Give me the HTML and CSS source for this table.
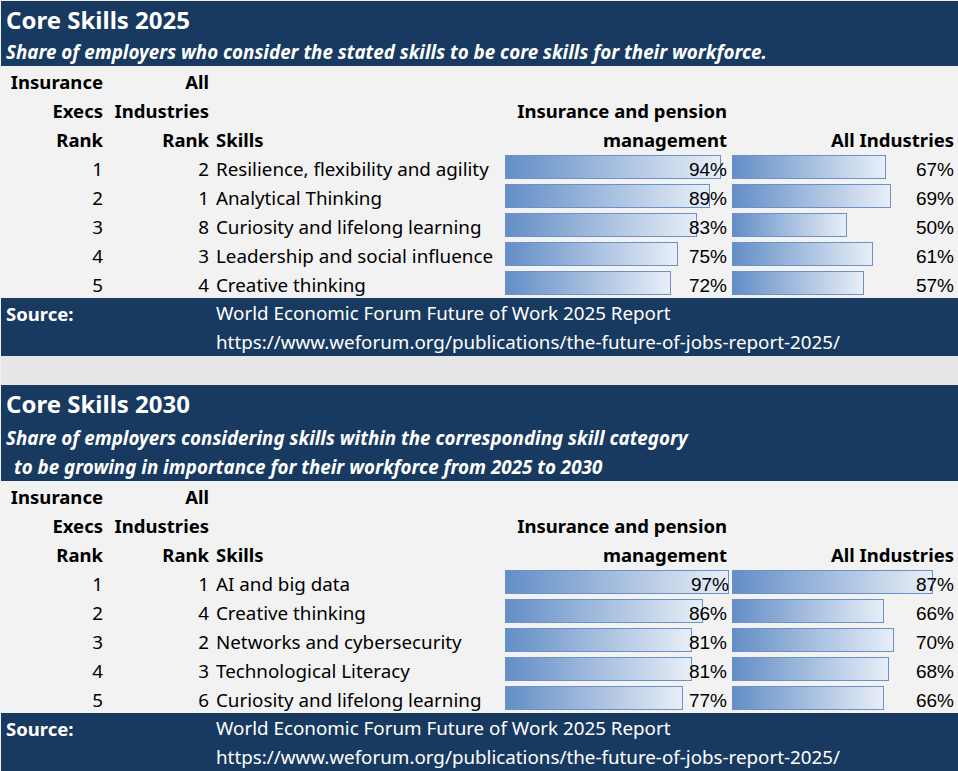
FILE: index.html
```html
<!DOCTYPE html>
<html lang="en">
<head>
<meta charset="utf-8">
<title>Core Skills</title>
<link rel="stylesheet" href="styles.css">
</head>
<body>
<div class="sheet">
  <section class="block">
    <div class="title">Core Skills 2025</div>
    <div class="subtitle">Share of employers who consider the stated skills to be core skills for their workforce.</div>
    <div class="row head"><div class="c a">Insurance</div><div class="c b">All</div><div class="c s"></div><div class="c d"></div><div class="c e"></div></div>
    <div class="row head"><div class="c a">Execs</div><div class="c b">Industries</div><div class="c s"></div><div class="c d">Insurance and pension</div><div class="c e"></div></div>
    <div class="row head"><div class="c a">Rank</div><div class="c b">Rank</div><div class="c s">Skills</div><div class="c d">management</div><div class="c e">All Industries</div></div>

    <div class="row data"><div class="c a">1</div><div class="c b">2</div><div class="c s">Resilience, flexibility and agility</div>
      <div class="c d bar-cell"><span class="bar" style="width:216px"></span><span class="pct">94%</span></div>
      <div class="c e bar-cell"><span class="bar" style="width:154px"></span><span class="pct">67%</span></div></div>
    <div class="row data"><div class="c a">2</div><div class="c b">1</div><div class="c s">Analytical Thinking</div>
      <div class="c d bar-cell"><span class="bar" style="width:205px"></span><span class="pct">89%</span></div>
      <div class="c e bar-cell"><span class="bar" style="width:159px"></span><span class="pct">69%</span></div></div>
    <div class="row data"><div class="c a">3</div><div class="c b">8</div><div class="c s">Curiosity and lifelong learning</div>
      <div class="c d bar-cell"><span class="bar" style="width:192px"></span><span class="pct">83%</span></div>
      <div class="c e bar-cell"><span class="bar" style="width:115px"></span><span class="pct">50%</span></div></div>
    <div class="row data"><div class="c a">4</div><div class="c b">3</div><div class="c s">Leadership and social influence</div>
      <div class="c d bar-cell"><span class="bar" style="width:173px"></span><span class="pct">75%</span></div>
      <div class="c e bar-cell"><span class="bar" style="width:141px"></span><span class="pct">61%</span></div></div>
    <div class="row data"><div class="c a">5</div><div class="c b">4</div><div class="c s">Creative thinking</div>
      <div class="c d bar-cell"><span class="bar" style="width:166px"></span><span class="pct">72%</span></div>
      <div class="c e bar-cell"><span class="bar" style="width:132px"></span><span class="pct">57%</span></div></div>

    <div class="source">
      <div class="src-row"><div class="src-label">Source:</div><div class="src-text">World Economic Forum Future of Work 2025 Report</div></div>
      <div class="src-row"><div class="src-label"></div><div class="src-text">https://www.weforum.org/publications/the-future-of-jobs-report-2025/</div></div>
    </div>
  </section>

  <div class="spacer"></div>

  <section class="block">
    <div class="title title-tall">Core Skills 2030</div>
    <div class="subtitle">Share of employers considering skills within the corresponding skill category</div>
    <div class="subtitle sub-indent">to be growing in importance for their workforce from 2025 to 2030</div>
    <div class="row head"><div class="c a">Insurance</div><div class="c b">All</div><div class="c s"></div><div class="c d"></div><div class="c e"></div></div>
    <div class="row head"><div class="c a">Execs</div><div class="c b">Industries</div><div class="c s"></div><div class="c d">Insurance and pension</div><div class="c e"></div></div>
    <div class="row head"><div class="c a">Rank</div><div class="c b">Rank</div><div class="c s">Skills</div><div class="c d">management</div><div class="c e">All Industries</div></div>

    <div class="row data"><div class="c a">1</div><div class="c b">1</div><div class="c s">AI and big data</div>
      <div class="c d bar-cell"><span class="bar" style="width:224px"></span><span class="pct">97%</span></div>
      <div class="c e bar-cell"><span class="bar" style="width:201px"></span><span class="pct">87%</span></div></div>
    <div class="row data"><div class="c a">2</div><div class="c b">4</div><div class="c s">Creative thinking</div>
      <div class="c d bar-cell"><span class="bar" style="width:198px"></span><span class="pct">86%</span></div>
      <div class="c e bar-cell"><span class="bar" style="width:152px"></span><span class="pct">66%</span></div></div>
    <div class="row data"><div class="c a">3</div><div class="c b">2</div><div class="c s">Networks and cybersecurity</div>
      <div class="c d bar-cell"><span class="bar" style="width:187px"></span><span class="pct">81%</span></div>
      <div class="c e bar-cell"><span class="bar" style="width:162px"></span><span class="pct">70%</span></div></div>
    <div class="row data"><div class="c a">4</div><div class="c b">3</div><div class="c s">Technological Literacy</div>
      <div class="c d bar-cell"><span class="bar" style="width:187px"></span><span class="pct">81%</span></div>
      <div class="c e bar-cell"><span class="bar" style="width:157px"></span><span class="pct">68%</span></div></div>
    <div class="row data"><div class="c a">5</div><div class="c b">6</div><div class="c s">Curiosity and lifelong learning</div>
      <div class="c d bar-cell"><span class="bar" style="width:178px"></span><span class="pct">77%</span></div>
      <div class="c e bar-cell"><span class="bar" style="width:152px"></span><span class="pct">66%</span></div></div>

    <div class="source">
      <div class="src-row"><div class="src-label">Source:</div><div class="src-text">World Economic Forum Future of Work 2025 Report</div></div>
      <div class="src-row"><div class="src-label"></div><div class="src-text">https://www.weforum.org/publications/the-future-of-jobs-report-2025/</div></div>
    </div>
  </section>
</div>
</body>
</html>
```
FILE: styles.css
```css
html, body {
  margin: 0;
  padding: 0;
}
body {
  background: #f0f0f0;
  font-family: "Noto Sans", "Open Sans", sans-serif;
  color: #000;
  width: 958px;
  height: 771px;
  overflow: hidden;
}
.sheet {
  padding: 1px 0 0 1px;
}
.block {
  background: #f2f2f2;
}
.title {
  background: #183a60;
  color: #fff;
  font-weight: 700;
  font-size: 24px;
  height: 36px;
  line-height: 36px;
  padding-left: 5px;
  box-sizing: border-box;
  padding-top: 1px;
  white-space: nowrap;
}
.title-tall {
  height: 38px;
  line-height: 35px;
}
.subtitle {
  background: #183a60;
  color: #fff;
  font-weight: 700;
  font-style: italic;
  font-size: 18.8px;
  height: 29px;
  box-sizing: border-box;
  padding-top: 1px;
  line-height: 29px;
  padding-left: 5px;
  white-space: nowrap;
}
.sub-indent {
  padding-left: 13px;
}
.row {
  display: grid;
  grid-template-columns: 105px 106px 292px 227px 227px;
  height: 29px;
  font-size: 18.8px;
  line-height: 27px;
}
.head {
  font-weight: 700;
  font-size: 18.5px;
}
.c {
  white-space: nowrap;
  padding-top: 2px;
}
.a { text-align: right; padding-right: 3px; }
.b { text-align: right; padding-right: 3px; }
.s { padding-left: 4px; }
.d, .e { text-align: right; padding-right: 4px; }
.data .c {
  padding-top: 3px;
}
.data .bar-cell {
  display: grid;
  padding-top: 0;
  padding-left: 1px;
}
.bar-cell > * {
  grid-area: 1 / 1;
}
.bar {
  justify-self: start;
  align-self: start;
  margin-top: 2px;
  height: 24px;
  box-sizing: border-box;
  border: 1px solid #6b91c9;
  background: linear-gradient(to right, #638ec6, #e8eef7);
}
.pct {
  justify-self: end;
  padding-top: 3px;
  font-family: "Liberation Sans", Arial, sans-serif;
  font-size: 19px;
}
.source {
  background: #183a60;
  color: #fff;
}
.src-row {
  display: grid;
  grid-template-columns: 211px 1fr;
  height: 29px;
  box-sizing: border-box;
  padding-top: 2px;
  line-height: 27px;
  font-size: 18.8px;
  white-space: nowrap;
}
.src-label {
  font-weight: 700;
  font-size: 18.5px;
  padding-left: 5px;
}
.src-text {
  padding-left: 4px;
}
.spacer {
  height: 29px;
  background: #e6e6e6;
}
```
